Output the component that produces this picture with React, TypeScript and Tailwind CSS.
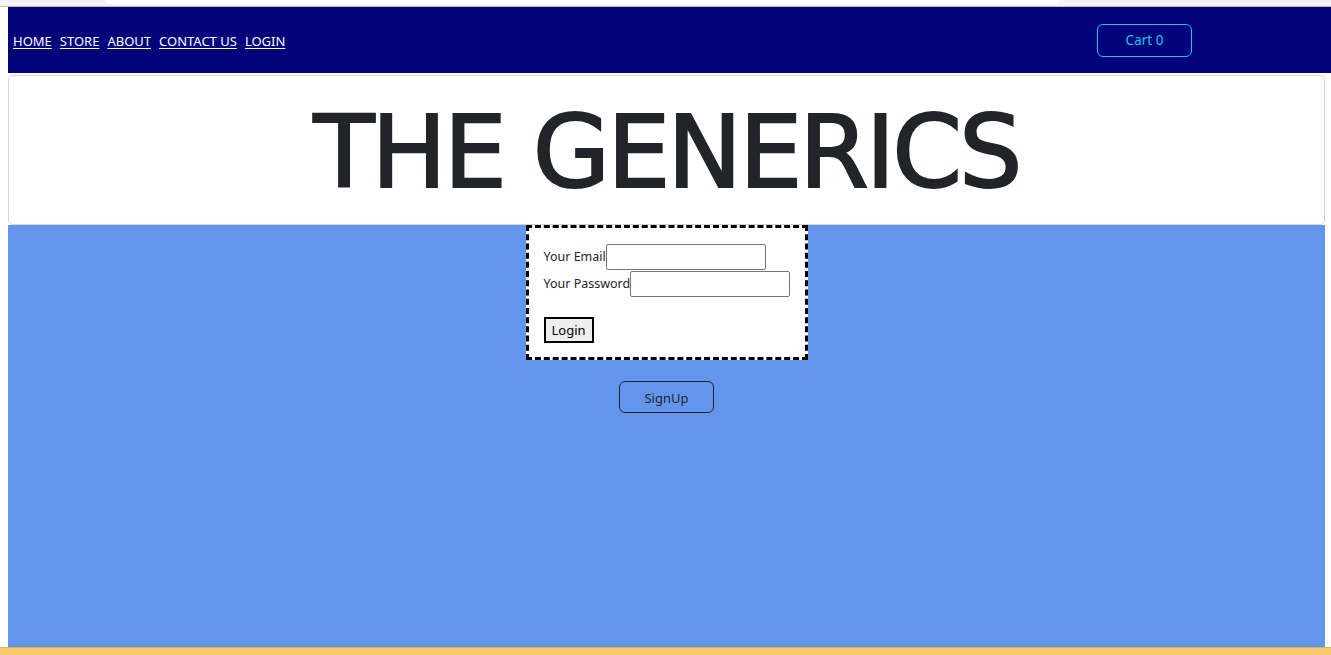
import React from "react";

export default function App() {
  const sans = { fontFamily: '"Noto Sans", "Open Sans", sans-serif' };
  return (
    <div className="w-[1331px] h-[655px] flex flex-col bg-white overflow-hidden" style={sans}>
      {/* browser chrome strip */}
      <div className="h-[6px] bg-[#f3f3f3] flex">
        <div className="ml-[105px] w-[955px] h-[4px] bg-white rounded-b-[8px]" />
      </div>
      <div className="h-px bg-[#bdbdbd]" />
      {/* navbar */}
      <nav className="ml-2 h-[66px] bg-[#02027a] flex items-center justify-between pl-[5px]">
        <div className="flex gap-[8px] text-[13px] text-white pt-[3px]">
          <a className="underline underline-offset-[2px]" href="#">HOME</a>
          <a className="underline underline-offset-[2px]" href="#">STORE</a>
          <a className="underline underline-offset-[2px]" href="#">ABOUT</a>
          <a className="underline underline-offset-[2px]" href="#">CONTACT US</a>
          <a className="underline underline-offset-[2px]" href="#">LOGIN</a>
        </div>
        <button className="mr-[139px] w-[95px] h-[33px] border border-[#0dcaf0] rounded-[6px] text-[#0dcaf0] text-[13.5px]">
          Cart 0
        </button>
      </nav>
      {/* header */}
      <header className="ml-2 mr-[6px] mt-[2px] h-[150px] border border-[#d3d3d3] rounded-[5px] bg-white flex items-center justify-center">
        <h1
          className="text-[#212529] text-[100px] leading-none tracking-[-3px] pt-[6px]"
          style={{ fontFamily: '"Comic Sans MS", "DejaVu Sans", sans-serif', WebkitTextStroke: "2px #212529" }}
        >
          THE GENERICS
        </h1>
      </header>
      {/* main */}
      <main className="ml-2 mr-[6px] flex-1 bg-[#6495ed] flex flex-col items-center">
        <form className="w-[282px] h-[135px] border-[3px] border-dashed border-black bg-white pl-[15px] pr-[12px] pt-[15px] pb-[15px] text-[12.5px] text-[#212529]">
          <div className="flex items-center h-[27px] whitespace-nowrap">
            <span className="shrink-0 pt-[2px]">Your Email</span>
            <input className="shrink-0 w-[160px] h-[26px] border border-[#767676] rounded-[2px] bg-white" />
          </div>
          <div className="flex items-center h-[27px] whitespace-nowrap">
            <span className="shrink-0 pt-[2px]">Your Password</span>
            <input className="shrink-0 w-[160px] h-[26px] border border-[#767676] rounded-[2px] bg-white" />
          </div>
          <button
            type="button"
            className="mt-[20px] w-[50px] h-[26px] border-2 border-black bg-[#efefef] text-black text-[13px] pt-px"
          >
            Login
          </button>
        </form>
        <button className="mt-[21px] w-[95px] h-[32px] border border-[#212529] rounded-[6px] text-[#212529] text-[13px] pt-[3px]">
          SignUp
        </button>
      </main>
      {/* bottom bar */}
      <div className="h-px bg-[#d6b15f]" />
      <div className="h-[7px] bg-[#f4ca6b]" />
    </div>
  );
}
